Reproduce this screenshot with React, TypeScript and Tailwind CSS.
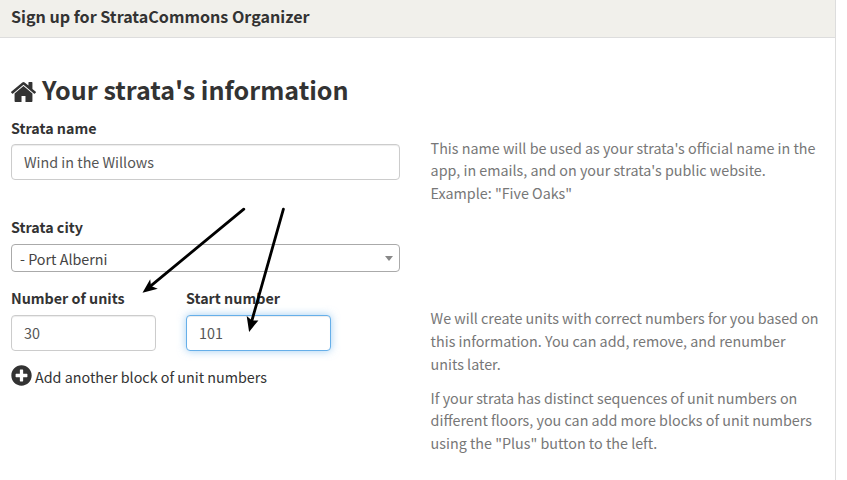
import type { ReactNode } from "react";
import { FaPlusCircle } from "react-icons/fa";

function HomeIcon({ className }: { className: string }) {
  return (
    <svg className={className} viewBox="89 253 1614 1283" preserveAspectRatio="none" fill="currentColor">
      <path d="M1408 992v480q0 26-19 45t-45 19h-384v-384h-256v384h-384q-26 0-45-19t-19-45v-480q0-1 .5-3t.5-3l575-474 575 474q1 2 1 6zm223-69l-62 74q-8 9-21 11h-3q-13 0-21-7l-692-577-692 577q-12 8-24 7-13-2-21-11l-62-74q-8-10-7-23.5t11-21.5l719-599q32-26 76-26t76 26l244 204v-195q0-14 9-23t23-9h192q14 0 23 9t9 23v408l219 182q10 8 11 21.5t-7 23.5z" transform="translate(64 0)" />
    </svg>
  );
}

function Label({ children }: { children: ReactNode }) {
  return <div className="h-[22px] whitespace-nowrap text-[14.3px] leading-[20px] font-bold text-[#333]">{children}</div>;
}

function Field({ value, focused = false }: { value: string; focused?: boolean }) {
  return (
    <input
      readOnly
      value={value}
      className={
        "block h-9 w-full rounded border bg-white px-3 pt-0 pb-[2px] text-[14.34px] text-[#555] outline-none " +
        (focused
          ? "border-[#66afe9] shadow-[inset_0_1px_1px_rgba(0,0,0,0.075),0_0_8px_rgba(102,175,233,0.6)]"
          : "border-[#ccc] shadow-[inset_0_1px_1px_rgba(0,0,0,0.075)]")
      }
    />
  );
}

function Arrows() {
  return (
    <svg className="pointer-events-none absolute top-0 left-0" width="847" height="480" viewBox="0 0 847 480">
      <g stroke="#000" strokeWidth="2.8" strokeLinecap="round">
        <line x1="243.8" y1="209.2" x2="149" y2="287.3" />
        <line x1="283.4" y1="209.2" x2="251.2" y2="323" />
      </g>
      <path d="M142.5 292.8 L150.2 279.2 L151 286 L157.8 288.7 Z" />
      <path d="M249.1 331.9 L246.7 316 L252 320.6 L258.4 320.4 Z" />
    </svg>
  );
}

export default function App() {
  return (
    <div className="relative h-[480px] w-[847px] overflow-hidden bg-white font-['Noto_Sans_CJK_SC',sans-serif] text-[14.34px] text-[#333]">
      <div className="h-[480px] w-[836px] border-r border-[#ddd]">
        <header className="h-[38px] border-b border-[#ddd] bg-[#f1f0eb] pl-[11px] text-[16.1px] leading-[32px] font-bold">
          Sign up for StrataCommons Organizer
        </header>
        <main className="pl-[11px]">
          <h2 className="flex h-[80px] items-center gap-[6px] pt-[22px] text-[25.08px] leading-[30px] font-bold">
            <HomeIcon className="mt-[6px] h-[20px] w-[25px]" />
            Your strata's information
          </h2>
          <div className="flex gap-[31px]">
            <section className="w-[389px]">
              <Label>Strata name</Label>
              <div className="mt-1">
                <Field value="Wind in the Willows" />
              </div>
              <div className="mt-[37px]">
                <Label>Strata city</Label>
              </div>
              <div className="mt-[5px] flex h-7 items-center justify-between rounded border border-[#aaa] pr-[6px] pl-2 text-[#444]">
                <span className="pt-[2px] leading-[26px]">- Port Alberni</span>
                <span className="h-0 w-0 border-x-4 border-t-[5px] border-x-transparent border-t-[#888]" />
              </div>
              <div className="mt-4 flex gap-[30px]">
                <div className="w-[145px]">
                  <Label>Number of units</Label>
                  <div className="mt-[5px]">
                    <Field value="30" />
                  </div>
                </div>
                <div className="w-[145px]">
                  <Label>Start number</Label>
                  <div className="mt-[5px]">
                    <Field value="101" focused />
                  </div>
                </div>
              </div>
              <div className="mt-[14px] flex h-[24px] items-center gap-[3px]">
                <FaPlusCircle className="mb-[3px] h-[21px] w-[21px]" />
                <span>Add another block of unit numbers</span>
              </div>
            </section>
            <section className="-ml-[0.4px] w-[394px] pt-[19px] text-[14.32px] leading-[22.85px] whitespace-nowrap text-[#777]">
              <p className="h-[170.4px] leading-[22.4px]">
                This name will be used as your strata's official name in the
                <br />
                app, in emails, and on your strata's public website.
                <br />
                Example: "Five Oaks"
              </p>
              <p className="mb-[10.6px]">
                We will create units with correct numbers for you based on
                <br />
                this information. You can add, remove, and renumber
                <br />
                units later.
              </p>
              <p>
                If your strata has distinct sequences of unit numbers on
                <br />
                different floors, you can add more blocks of unit numbers
                <br />
                using the "Plus" button to the left.
              </p>
            </section>
          </div>
        </main>
      </div>
      <Arrows />
    </div>
  );
}
